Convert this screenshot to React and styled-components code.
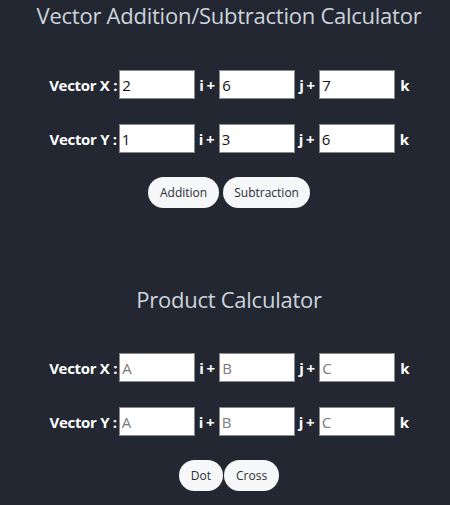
import React from 'react';
import styled, { createGlobalStyle } from 'styled-components';

const GlobalStyle = createGlobalStyle`
  html, body {
    margin: 0;
    padding: 0;
    background: #222731;
  }
  body {
    font-family: 'Open Sans', 'Liberation Sans', sans-serif;
  }
`;

const Page = styled.div`
  box-sizing: border-box;
  width: 450px;
  min-height: 505px;
  padding-left: 8px;
  background: #222731;
  display: flex;
  flex-direction: column;
  align-items: center;
`;

const Section = styled.section`
  display: flex;
  flex-direction: column;
  align-items: center;
  margin-top: ${p => p.$top}px;
`;

const Title = styled.h2`
  margin: 0;
  font-size: 22px;
  font-weight: 400;
  line-height: 30px;
  letter-spacing: -0.25px;
  color: #cdd4de;
  margin-bottom: ${p => p.$gap}px;
  white-space: nowrap;
`;

const Row = styled.div`
  display: flex;
  align-items: center;
  height: 29px;
  margin-bottom: 25px;
`;

const Label = styled.span`
  font-size: 15px;
  font-weight: 700;
  color: #ffffff;
  letter-spacing: -0.3px;
  margin-right: 2px;
  white-space: nowrap;
`;

const Unit = styled.span`
  box-sizing: border-box;
  width: ${p => (p.$last ? 'auto' : '24px')};
  padding-left: ${p => (p.$last ? 5 : 4)}px;
  font-size: 15px;
  font-weight: 700;
  letter-spacing: -0.6px;
  color: #ffffff;
  white-space: nowrap;
`;

const Field = styled.input`
  box-sizing: border-box;
  width: 76px;
  height: 29px;
  padding: 0 2px;
  border: 1px solid #8a8a8a;
  border-radius: 0;
  background: #ffffff;
  font-family: 'Open Sans', 'Liberation Sans', sans-serif;
  font-size: 15px;
  color: #111111;
  outline: none;
  &::placeholder {
    color: #7a7a7a;
  }
`;

const Buttons = styled.div`
  display: flex;
  gap: ${p => p.$gap}px;
  margin-top: -1px;
`;

const Pill = styled.button`
  height: 31px;
  padding: 0 ${p => p.$pad}px;
  border: none;
  border-radius: 16px;
  background: #f6f7f9;
  color: #2a2d33;
  font-family: 'Open Sans', 'Liberation Sans', sans-serif;
  font-size: 12px;
  cursor: pointer;
`;

const VectorRow = ({ name, values, placeholders }) => (
  <Row>
    <Label>Vector {name} :</Label>
    <Field defaultValue={values?.[0]} placeholder={placeholders?.[0]} />
    <Unit>i +</Unit>
    <Field defaultValue={values?.[1]} placeholder={placeholders?.[1]} />
    <Unit>j +</Unit>
    <Field defaultValue={values?.[2]} placeholder={placeholders?.[2]} />
    <Unit $last>k</Unit>
  </Row>
);

export default function App() {
  const abc = ['A', 'B', 'C'];
  return (
    <Page>
      <GlobalStyle />
      <Section $top={0}>
        <Title $gap={40}>Vector Addition/Subtraction Calculator</Title>
        <VectorRow name="X" values={['2', '6', '7']} />
        <VectorRow name="Y" values={['1', '3', '6']} />
        <Buttons $gap={4}>
          <Pill $pad={12}>Addition</Pill>
          <Pill $pad={11}>Subtraction</Pill>
        </Buttons>
      </Section>
      <Section $top={76}>
        <Title $gap={39}>Product Calculator</Title>
        <VectorRow name="X" placeholders={abc} />
        <VectorRow name="Y" placeholders={abc} />
        <Buttons $gap={1}>
          <Pill $pad={12}>Dot</Pill>
          <Pill $pad={12}>Cross</Pill>
        </Buttons>
      </Section>
    </Page>
  );
}
